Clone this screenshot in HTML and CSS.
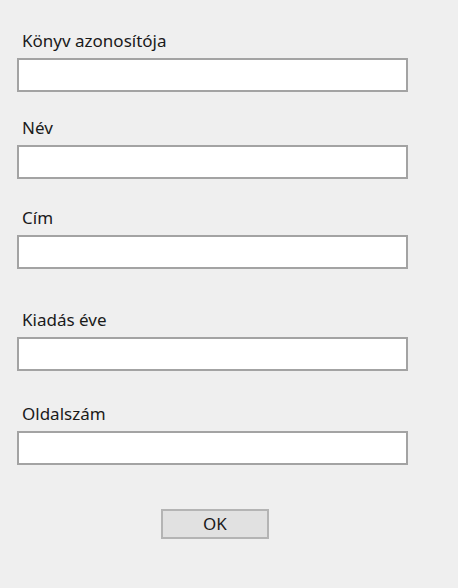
FILE: index.html
```html
<!DOCTYPE html>
<html lang="hu">
<head>
<meta charset="utf-8">
<title>Könyv</title>
<link rel="stylesheet" href="styles.css">
</head>
<body>
<div class="form">
  <div class="field">
    <label class="label">Könyv azonosítója</label>
    <div class="box"></div>
  </div>
  <div class="field field-2">
    <label class="label">Név</label>
    <div class="box"></div>
  </div>
  <div class="field field-3">
    <label class="label">Cím</label>
    <div class="box"></div>
  </div>
  <div class="field field-4">
    <label class="label">Kiadás éve</label>
    <div class="box"></div>
  </div>
  <div class="field field-5">
    <label class="label">Oldalszám</label>
    <div class="box"></div>
  </div>
  <div class="actions">
    <button class="btn" type="button">OK</button>
  </div>
</div>
</body>
</html>
```
FILE: styles.css
```css
html, body {
  margin: 0;
  padding: 0;
  background: #efefef;
}
body {
  width: 458px;
  height: 588px;
  font-family: "Noto Sans", "Open Sans", sans-serif;
  color: #1a1a1a;
}
.form {
  display: flex;
  flex-direction: column;
  padding: 30px 0 0 17px;
}
.field {
  display: flex;
  flex-direction: column;
  gap: 6px;
}
.field-2 { margin-top: 25px; }
.field-3 { margin-top: 28px; }
.field-4 { margin-top: 40px; }
.field-5 { margin-top: 32px; }
.label {
  font-size: 17px;
  line-height: 22px;
  height: 22px;
  padding-left: 5px;
}
.box {
  width: 391px;
  height: 34px;
  box-sizing: border-box;
  background: #ffffff;
  border: 2px solid #a3a3a3;
}
.actions {
  margin-top: 44px;
  padding-left: 144px;
  display: flex;
}
.btn {
  width: 108px;
  height: 30px;
  box-sizing: border-box;
  background: #e1e1e1;
  border: 2px solid #b4b4b4;
  border-radius: 0;
  font-family: "Noto Sans", "Open Sans", sans-serif;
  font-size: 17px;
  color: #1a1a1a;
  padding: 0;
  line-height: 26px;
}
```
